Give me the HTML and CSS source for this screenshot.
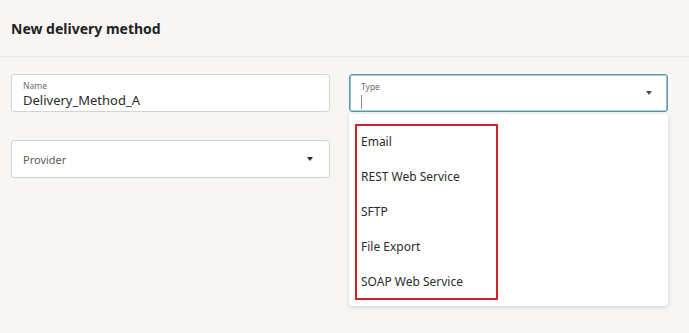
FILE: index.html
```html
<!DOCTYPE html>
<html>
<head>
<meta charset="utf-8">
<title>New delivery method</title>
<link rel="stylesheet" href="styles.css">
</head>
<body>

<header class="page-header">
    <h1>New delivery method</h1>
</header>

<main class="form">
    <div class="field">
        <label class="field-label">Name</label>
        <div class="field-value">Delivery_Method_A</div>
    </div>

    <div class="field select focused">
        <label class="field-label">Type</label>
        <span class="caret"></span>
        <span class="arrow"></span>

        <div class="menu">
            <ul class="options">
                <li>Email</li>
                <li>REST Web Service</li>
                <li>SFTP</li>
                <li>File Export</li>
                <li>SOAP Web Service</li>
            </ul>
        </div>
    </div>

    <div class="field select empty">
        <span class="placeholder">Provider</span>
        <span class="arrow"></span>
    </div>
</main>

</body>
</html>
```

FILE: styles.css
```css
html, body { margin: 0; height: 100%; }
body { background-color: #f7f6f4; font-family: "Noto Sans", "Open Sans", sans-serif; color: #2b2b2b; }

.page-header { height: 56px; border-bottom: 1px solid #ebe9e5; display: flex; align-items: center; padding: 0 11px; }
.page-header h1 { margin: 0; font-size: 14px; font-weight: 700; color: #1f1f1f; }

.form { display: grid; grid-template-columns: 319px 319px; column-gap: 19px; row-gap: 28px; padding: 17px 0 0 11px; }

.field { position: relative; box-sizing: border-box; height: 38px; background-color: #fff; border: 1px solid #d5d3cf; border-radius: 3px; padding: 0 11px; }
.field-label { display: block; font-size: 8.5px; color: #6b6b6b; line-height: 10px; margin-top: 6px; }
.field-value { font-size: 13px; line-height: 17px; color: #2b2b2b; margin-top: 1px; }

.field.focused { border-color: #5b98a9; box-shadow: inset 0 0 0 0.6px #5b98a9; }
.field.focused .field-label { margin-top: 7px; }
.caret { display: block; width: 1px; height: 14px; margin-top: 3px; background-color: #8a8a8a; }

.field.empty { display: flex; align-items: center; grid-column: 1; }
.placeholder { font-size: 11px; color: #5c5c5c; }

.arrow { position: absolute; right: 16px; top: 50%; margin-top: -2px; width: 0; height: 0; border-left: 3px solid transparent; border-right: 3px solid transparent; border-top: 4px solid #2a2a2a; }
.focused .arrow { right: 15px; border-top-color: #4a4a4a; }

.menu { position: absolute; left: -1px; right: -1px; top: 39px; height: 192px; box-sizing: border-box; background-color: #fff; border-radius: 3px; box-shadow: 0 1px 4px rgba(0, 0, 0, 0.16); padding: 10px 0 0 6px; z-index: 2; }
.options { list-style: none; margin: 0; padding: 0; width: 143px; height: 176px; box-sizing: border-box; border: 2px solid #d7202e; }
.options li { height: 35px; box-sizing: border-box; padding: 0 0 5px 4px; display: flex; align-items: center; font-size: 12px; color: #2b2b2b; }
```
